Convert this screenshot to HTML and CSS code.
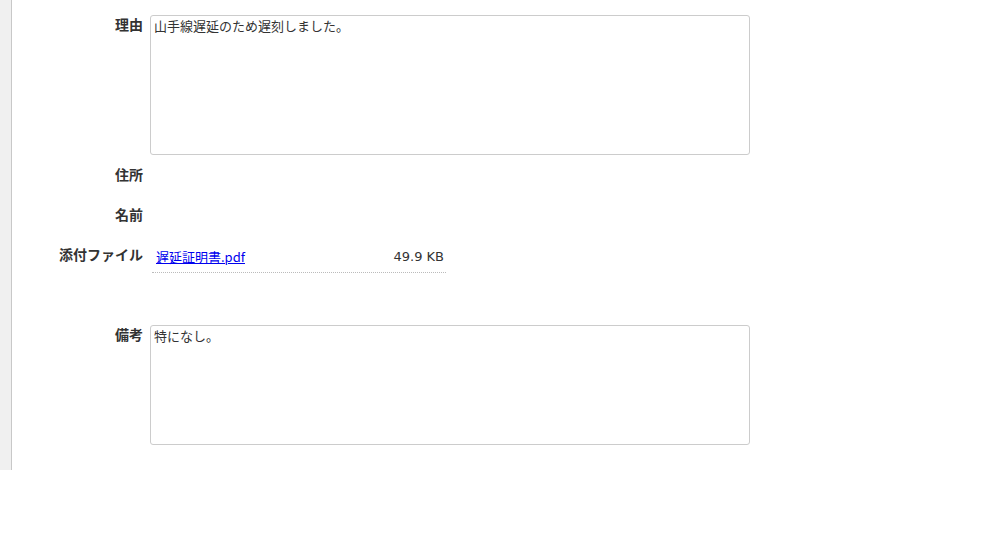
FILE: index.html
```html
<!DOCTYPE html>
<html lang="ja">
<head>
<meta charset="utf-8">
<title>詳細</title>
<link rel="stylesheet" href="styles.css">
</head>
<body>
<div class="page">
  <div class="sidebar"></div>
  <div class="content">
    <div class="row">
      <div class="label">理由</div>
      <div class="field"><textarea class="area area-tall" readonly>山手線遅延のため遅刻しました。</textarea></div>
    </div>
    <div class="row row-empty">
      <div class="label">住所</div>
      <div class="field"></div>
    </div>
    <div class="row row-empty">
      <div class="label">名前</div>
      <div class="field"></div>
    </div>
    <div class="row row-file">
      <div class="label">添付ファイル</div>
      <div class="field">
        <div class="file-item">
          <a class="file-link" href="#">遅延証明書.pdf</a>
          <span class="file-size">49.9 KB</span>
        </div>
      </div>
    </div>
    <div class="row">
      <div class="label">備考</div>
      <div class="field"><textarea class="area area-short" readonly>特になし。</textarea></div>
    </div>
  </div>
</div>
</body>
</html>
```
FILE: styles.css
```css
html, body {
  margin: 0;
  padding: 0;
  background: #ffffff;
}
body {
  font-family: "Noto Sans CJK JP", "Noto Sans", sans-serif;
  color: #333333;
  font-size: 13px;
}
.page {
  display: flex;
  align-items: stretch;
}
.sidebar {
  width: 11px;
  background: #f0f0f0;
  border-right: 1px solid #c8c8c8;
}
.content {
  padding: 15px 0 25px 0;
  display: flex;
  flex-direction: column;
  gap: 10px;
}
.row {
  display: flex;
  column-gap: 7px;
}
.label {
  width: 131px;
  text-align: right;
  font-weight: bold;
  font-size: 14px;
  line-height: 18px;
  padding-bottom: 2px;
  color: #333333;
}
.field {
  width: 600px;
}
.row-empty {
  min-height: 30px;
}
.row-file {
  margin-bottom: 42px;
}
.area {
  display: block;
  box-sizing: border-box;
  width: 600px;
  margin: 0;
  padding: 1px 3px;
  border: 1px solid #cccccc;
  border-radius: 3px;
  font-family: "Noto Sans CJK JP", "Noto Sans", sans-serif;
  font-size: 13px;
  line-height: 18px;
  color: #333333;
  background: #ffffff;
  resize: none;
  outline: none;
}
.area-tall {
  height: 140px;
}
.area-short {
  height: 120px;
}
.file-item {
  margin-left: 2px;
  width: 294px;
  box-sizing: border-box;
  padding: 2px 2px 5px 4px;
  display: flex;
  justify-content: space-between;
  border-bottom: 1px dotted #bbbbbb;
  line-height: 20px;
  font-size: 13px;
}
.file-link {
  color: #0000ee;
  text-decoration: underline;
}
.file-size {
  font-family: "DejaVu Sans", "Noto Sans CJK JP", sans-serif;
  color: #333333;
}
```
